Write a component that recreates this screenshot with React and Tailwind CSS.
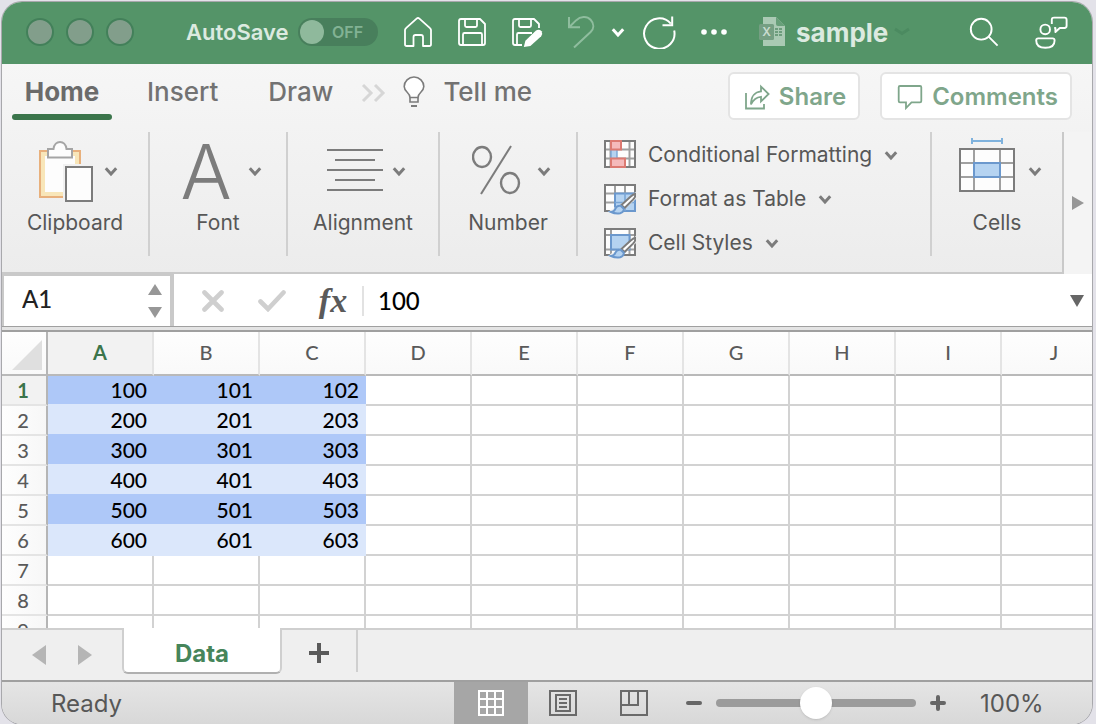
import React, { useState } from "react";

const COLUMNS = ["A", "B", "C", "D", "E", "F", "G", "H", "I", "J"];
const ROWS = [
  [100, 101, 102],
  [200, 201, 203],
  [300, 301, 303],
  [400, 401, 403],
  [500, 501, 503],
  [600, 601, 603],
  [],
  [],
  [],
];

function Chevron({ className = "text-[#7c7c7c]" }) {
  return (
    <svg width="14" height="12" viewBox="0 -2 14 12" fill="none" stroke="currentColor" strokeWidth="3" className={className} aria-hidden="true">
      <path d="M1.8 1.2 L7 6.9 L12.2 1.2" />
    </svg>
  );
}

function TitleBar() {
  const [autoSave, setAutoSave] = useState(false);
  return (
    <header className="flex h-[62px] shrink-0 items-center bg-[#549468] pr-6 pb-[2px] pl-6 text-white">
      <div className="flex gap-3">
        {["Close", "Minimize", "Zoom"].map((name) => (
          <button key={name} aria-label={name} className="size-7 rounded-full border-2 border-[#43805a] bg-[#829e8b]" />
        ))}
      </div>
      <label className="ml-[52px] flex items-center text-[22px] font-semibold text-[#dceae0]">
        <span className="w-28">AutoSave</span>
        <input type="checkbox" role="switch" checked={autoSave} onChange={(e) => setAutoSave(e.target.checked)} className="peer sr-only" />
        <span className="flex h-7 w-20 items-center gap-2 rounded-full bg-[#487f5c] px-[2px] text-[16px] font-semibold text-[#82b294] peer-checked:flex-row-reverse">
          <span className="size-6 rounded-full bg-[#8fb99c]" />
          {autoSave ? "ON" : "OFF"}
        </span>
      </label>
      <div className="ml-[25px] flex items-center gap-6">
        <button aria-label="Home">
          <svg width="30" height="32" viewBox="0 0 30 32" fill="none" stroke="currentColor" strokeWidth="1.8" strokeLinejoin="round">
            <path d="M2 14 Q2 13 3 12.2 L13.6 2.6 Q15 1.4 16.4 2.6 L27 12.2 Q28 13 28 14 V28.2 Q28 30 26.2 30 H20 V21 Q20 19 18 19 H12.5 Q10.5 19 10.5 21 V30 H3.8 Q2 30 2 28.2 Z" />
          </svg>
        </button>
        <button aria-label="Save">
          <svg width="30" height="30" viewBox="0 0 30 30" fill="none" stroke="currentColor" strokeWidth="1.8" strokeLinejoin="round">
            <path d="M4 2 H23 L28 7 V26 Q28 28 26 28 H4 Q2 28 2 26 V4 Q2 2 4 2 Z" />
            <path d="M8 2 V8.5 Q8 10 9.5 10 H18.5 Q20 10 20 8.5 V2 M6 28 V17.5 Q6 16 7.5 16 H23.5 Q25 16 25 17.5 V28" />
          </svg>
        </button>
        <button aria-label="Save as">
          <svg width="32" height="30" viewBox="0 0 32 30" fill="none" stroke="currentColor" strokeWidth="1.8" strokeLinejoin="round">
            <path d="M11 28 H4 Q2 28 2 26 V4 Q2 2 4 2 H23 L28 7 V11" />
            <path d="M8 2 V8.5 Q8 10 9.5 10 H18.5 Q20 10 20 8.5 V2 M6 28 V17.5 Q6 16 7.5 16 H21" />
            <path d="M12.8 30 L14.4 23.8 L25 13.6 Q28 11.8 30.6 14.2 Q32 16.8 30.2 19.2 L19.4 29 Z" fill="currentColor" stroke="none" />
          </svg>
        </button>
      </div>
      <button aria-label="Undo" className="ml-6 text-[#8fbd9e]">
        <svg width="30" height="34" viewBox="0 0 30 34" fill="none" stroke="currentColor" strokeWidth="2">
          <path d="M2 2 V12.2 H13 M2.4 12 L9 5.4 C13.5 1.2 20 1 23.6 4.8 C27.4 8.8 27 13.6 23.6 17 L7 32.5" />
        </svg>
      </button>
      <button aria-label="Undo options" className="ml-[14px]">
        <Chevron className="text-white" />
      </button>
      <button aria-label="Redo" className="ml-4">
        <svg width="36" height="34" viewBox="0 0 36 34" fill="none" stroke="currentColor" strokeWidth="2">
          <path d="M33.2 15.5 A15.2 15.2 0 1 1 29.8 8.6 M31.2 1.6 V10.3 H21.5" />
        </svg>
      </button>
      <button aria-label="More commands" className="ml-[23px]">
        <svg width="28" height="8" viewBox="0 0 28 8" fill="currentColor">
          <circle cx="4" cy="4" r="2.8" />
          <circle cx="14" cy="4" r="2.8" />
          <circle cx="24" cy="4" r="2.8" />
        </svg>
      </button>
      <div className="ml-[31px] flex items-center text-[26px] font-bold text-[#dceae0]">
        <svg width="26" height="30" viewBox="0 0 26 30" aria-hidden="true">
          <path d="M4 0 H17 L26 9 V29 H4 Z" fill="#aacab4" />
          <path d="M17 0 L26 9 H19 Q17 9 17 7 Z" fill="#679f79" />
          <rect x="0" y="7" width="15" height="16" rx="1.5" fill="#759f83" />
          <text x="7.5" y="19" textAnchor="middle" fontFamily="Inter, sans-serif" fontWeight="600" fontSize="12" fill="#c9dccf">X</text>
          <path d="M16 12 h3 M20 12 h3 M16 15 h3 M20 15 h3 M16 18 h3 M20 18 h3" stroke="#6d9d7d" strokeWidth="2" />
        </svg>
        <span className="ml-[11px]">sample</span>
        <svg width="16" height="10" viewBox="0 0 16 10" fill="none" stroke="#4b8a60" strokeWidth="3" className="ml-[6px]" aria-hidden="true">
          <path d="M1 2 L8 6.5 L15 2" />
        </svg>
      </div>
      <div className="ml-auto flex items-center gap-[35px]">
        <button aria-label="Search">
          <svg width="30" height="30" viewBox="0 0 30 30" fill="none" stroke="currentColor" strokeWidth="1.9">
            <circle cx="12.2" cy="12.2" r="10.4" />
            <path d="M19.6 19.6 L28.6 28.6" />
          </svg>
        </button>
        <button aria-label="Presence">
          <svg width="34" height="34" viewBox="0 0 34 34" fill="none" stroke="currentColor" strokeWidth="1.9" strokeLinejoin="round">
            <circle cx="11.2" cy="14.4" r="4.8" />
            <path d="M4.2 23.4 H18.6 Q20.6 23.4 20.6 25.4 C20.6 30.4 16.8 32.8 11.4 32.8 S2.2 30.4 2.2 25.4 Q2.2 23.4 4.2 23.4 Z" />
            <path d="M19.4 2.6 H30.4 Q32.6 2.6 32.6 4.8 V10.8 Q32.6 13 30.4 13 H25.8 L21.4 17 V13 H20.2 M17.8 9 V4.6 Q17.8 2.6 19.8 2.6" />
          </svg>
        </button>
      </div>
    </header>
  );
}

function TabStrip() {
  return (
    <nav className="flex h-[68px] shrink-0 items-start pt-2 text-[26px] leading-[40px] font-medium text-[#727272]">
      <button className="ml-[10px] flex h-12 w-[100px] flex-col items-center font-bold text-[#6b6b6b]">
        <span className="h-[42px]">Home</span>
        <span className="h-[6px] w-full rounded-full bg-[#3b754b]" />
      </button>
      <button className="ml-[35px]">Insert</button>
      <button className="ml-[50px]">Draw</button>
      <button aria-label="More tabs" className="ml-7 flex h-[42px] items-center">
        <svg width="26" height="20" viewBox="0 0 26 20" fill="none" stroke="#d6d6d6" strokeWidth="3">
          <path d="M2 2 L10 10 L2 18 M14 2 L22 10 L14 18" />
        </svg>
      </button>
      <button className="ml-4 flex items-center gap-[18px]">
        <svg width="22" height="32" viewBox="0 0 22 32" fill="none" stroke="#7c7c7c" strokeWidth="1.6">
          <path d="M7 21.5 C7 16.5 1.2 16 1.2 10.6 A9.8 9.6 0 0 1 20.8 10.6 C20.8 16 15 16.5 15 21.5 Z" fill="#fff" />
          <path d="M7 21.5 V26 H15 V21.5" />
          <path d="M8 30 H14" strokeWidth="2" />
        </svg>
        Tell me
      </button>
      <div className="mr-5 ml-auto flex gap-5 text-[24px] font-semibold text-[#7fa68b]">
        <button className="flex h-12 items-center gap-2 rounded-md border-2 border-[#e4e4e4] bg-white pt-[2px] pr-3 pl-[14px]">
          <svg width="27" height="26" viewBox="0 0 27 26" fill="none" stroke="currentColor" strokeWidth="1.8">
            <path d="M2 9 V24.5 H20 V20" />
            <path d="M7 20.5 C7 12.5 11 7.8 17 7.4 V2.6 L24.6 10 L17 17.4 V12.8 C12.5 13 9.5 15 7 20.5 Z" />
          </svg>
          Share
        </button>
        <button className="flex h-12 items-center gap-2 rounded-md border-2 border-[#e4e4e4] bg-white pt-[2px] pr-3 pl-[14px]">
          <svg width="28" height="26" viewBox="0 0 28 26" fill="none" stroke="currentColor" strokeWidth="1.8">
            <path d="M4 2 H24 Q25.3 2 25.3 3.3 V17 Q25.3 18.3 24 18.3 H15.5 L10 24 V18.3 H4 Q2.7 18.3 2.7 17 V3.3 Q2.7 2 4 2 Z" />
          </svg>
          Comments
        </button>
      </div>
    </nav>
  );
}

function Group({ label, className, children }) {
  return (
    <button className={`mb-4 flex flex-col items-center border-r-2 border-[#d0d0d0] ${className}`}>
      <span className="flex h-[78px] items-center gap-[9px] pl-[6px]">{children}<Chevron /></span>
      <span className="leading-[26px]">{label}</span>
    </button>
  );
}

function Brush() {
  return (
    <g>
      <path d="M33 7 L17 20 L8 25 L4 28 Q10 33 17 30 L22 24 L33 14 Z" fill="#f4f4f4" />
      <path d="M31.6 9.8 Q31.8 12.6 29 15.6 L20.6 24 L17.4 21 L27 12.2 Q29.6 10 31.6 9.8 Z" fill="#fff" stroke="#7c7c7c" strokeWidth="2" />
      <path d="M7 28 Q10.4 27.6 11.4 24.6 Q13.2 21.2 16.6 21.8 L19.8 24.8 Q19.8 28.2 16.2 29.2 Q11.6 30.2 7 28 Z" fill="#b5d3f1" stroke="#6b98cd" strokeWidth="2" />
    </g>
  );
}

function Ribbon() {
  return (
    <div className="flex h-[142px] shrink-0 text-[21px] leading-[26px] text-[#575757]">
      <div className="flex min-w-0 flex-1 border-r-2 border-b-2 border-[#c9c9c9]">
        <Group label="Clipboard" className="w-[148px]">
          <svg width="56" height="64" viewBox="0 1 56 64" fill="none">
            <rect x="1" y="13" width="40" height="46" fill="#f8e6b9" stroke="#e8b07c" strokeWidth="2" />
            <rect x="6" y="18" width="30" height="36" fill="#fdfdfd" />
            <path d="M9 11 H14.5 C15.5 1.6 26.5 1.6 27.5 11 H33 V19.5 H9 Z" fill="#fdfdfd" stroke="#a5a5a5" strokeWidth="2" />
            <rect x="24" y="26" width="32" height="38" fill="#f1f1f1" />
            <rect x="27" y="29" width="26" height="34" fill="#fdfdfd" stroke="#7c7c7c" strokeWidth="2" />
          </svg>
        </Group>
        <Group label="Font" className="w-[138px]">
          <span className="w-[58px] text-left text-[76px] leading-[48px] font-light text-[#7c7c7c]">A</span>
        </Group>
        <Group label="Alignment" className="w-[152px]">
          <svg width="56" height="48" viewBox="0 1 56 48" stroke="#7c7c7c" strokeWidth="2">
            <path d="M0 4 H56 M8 14 H48 M0 24 H56 M8 34 H48 M0 44 H56" />
          </svg>
        </Group>
        <Group label="Number" className="w-[138px]">
          <svg width="56" height="52" viewBox="0 1 56 52" fill="none" stroke="#7c7c7c" strokeWidth="2.4">
            <ellipse cx="10" cy="13" rx="9" ry="10" />
            <ellipse cx="38" cy="39" rx="9" ry="10" />
            <path d="M39 2 L9 50" strokeWidth="2" />
          </svg>
        </Group>
        <div className="mb-4 flex min-w-0 flex-1 flex-col border-r-2 border-[#d0d0d0] pt-px pl-[26px]">
          <button className="flex h-11 shrink-0 items-center gap-3">
            <svg width="32" height="34" viewBox="0 -2 32 34" fill="none">
              <rect x="1" y="1" width="30" height="26" fill="#fdfdfd" />
              <path d="M6.5 1 V27 M25.5 1 V27 M1 9.5 H31 M1 18.5 H31" stroke="#a0a0a0" strokeWidth="2" />
              <rect x="1" y="1" width="30" height="26" stroke="#7c7c7c" strokeWidth="2" />
              <rect x="7" y="9.5" width="6" height="9" fill="#b5d3f1" stroke="#79a5d5" strokeWidth="1.4" />
              <rect x="7" y="1" width="10" height="8.5" fill="#f5babb" stroke="#dc7a72" strokeWidth="2" />
              <rect x="7" y="18.5" width="14" height="8.5" fill="#f5babb" stroke="#dc7a72" strokeWidth="2" />
            </svg>
            Conditional Formatting
            <Chevron />
          </button>
          <button className="flex h-11 shrink-0 items-center gap-3">
            <svg width="32" height="34" viewBox="0 -2 32 34" fill="none">
              <rect x="1" y="1" width="30" height="26" fill="#fdfdfd" />
              <path d="M11 1 V27 M21 1 V9 M1 9.5 H31 M1 18.5 H11" stroke="#a0a0a0" strokeWidth="2" />
              <rect x="1" y="1" width="30" height="26" stroke="#7c7c7c" strokeWidth="2" />
              <rect x="11" y="9.5" width="20" height="17.5" fill="#b5d3f1" stroke="#6b98cd" strokeWidth="2" />
              <path d="M21 9 V27 M11 18.5 H31" stroke="#79a5d5" strokeWidth="1.6" />
              <Brush />
            </svg>
            Format as Table
            <Chevron />
          </button>
          <button className="flex h-11 shrink-0 items-center gap-3">
            <svg width="32" height="34" viewBox="0 -2 32 34" fill="none">
              <rect x="1" y="1" width="30" height="26" fill="#fdfdfd" />
              <path d="M7 1 V27 M25.5 1 V27 M1 7 H31 M1 21.5 H31" stroke="#a0a0a0" strokeWidth="2" />
              <rect x="1" y="1" width="30" height="26" stroke="#7c7c7c" strokeWidth="2" />
              <rect x="7" y="7" width="18.5" height="14.5" fill="#b5d3f1" stroke="#6b98cd" strokeWidth="2" />
              <Brush />
            </svg>
            Cell Styles
            <Chevron />
          </button>
        </div>
        <button className="mb-4 flex w-[130px] flex-col items-center">
          <span className="flex h-[78px] items-center gap-[13px] pl-[6px]">
            <svg width="56" height="70" viewBox="0 0 56 70" fill="none">
              <path d="M13 2 V8 M43 2 V8 M13 5 H43" stroke="#7fb2dd" strokeWidth="2" />
              <rect x="1" y="13" width="54" height="42" fill="#fdfdfd" />
              <path d="M15 13 V55 M41 13 V55 M1 27 H55 M1 41 H55" stroke="#a0a0a0" strokeWidth="2" />
              <rect x="1" y="13" width="54" height="42" stroke="#7c7c7c" strokeWidth="2" />
              <rect x="15" y="27" width="26" height="14" fill="#b5d3f1" stroke="#6b98cd" strokeWidth="2" />
            </svg>
            <Chevron />
          </span>
          <span>Cells</span>
        </button>
      </div>
      <button aria-label="Scroll ribbon" className="flex w-7 items-center justify-center bg-[#f4f4f4]">
        <svg width="12" height="14" viewBox="0 0 12 14" fill="#979797"><path d="M0 0 L12 7 L0 14 Z" /></svg>
      </button>
    </div>
  );
}

function FormulaBar() {
  return (
    <div className="flex h-[52px] shrink-0 bg-white font-[Lato,sans-serif] text-[24px] font-medium">
      <div className="flex w-[172px] items-center border-t-2 border-r-4 border-l-2 border-[#c9c9c9] pr-2">
        <input aria-label="Name box" defaultValue="A1" className="min-w-0 flex-1 bg-transparent pb-1 pl-[18px] text-[#222] outline-none" />
        <span className="flex flex-col gap-3">
          <button aria-label="Previous"><svg width="14" height="11" viewBox="0 0 14 11" fill="#979797" className="block"><path d="M7 0 L14 11 H0 Z" /></svg></button>
          <button aria-label="Next"><svg width="14" height="11" viewBox="0 0 14 11" fill="#979797" className="block"><path d="M0 0 H14 L7 11 Z" /></svg></button>
        </span>
      </div>
      <div className="flex flex-1 items-center pt-[2px]">
        <button aria-label="Cancel" className="ml-7">
          <svg width="22" height="22" viewBox="0 0 22 22" stroke="#cfcfcf" strokeWidth="4.6" strokeLinecap="round"><path d="M2.5 2.5 L19.5 19.5 M19.5 2.5 L2.5 19.5" /></svg>
        </button>
        <button aria-label="Enter" className="ml-[34px]">
          <svg width="28" height="22" viewBox="0 0 28 22" fill="none" stroke="#cfcfcf" strokeWidth="4.6" strokeLinecap="round"><path d="M2.5 11.5 L10 19 L25.5 2.5" /></svg>
        </button>
        <button aria-label="Insert function" className="ml-[30px] w-[34px] font-['Liberation_Serif',serif] text-[34px] leading-[44px] font-bold text-[#5a5a5a] italic">fx</button>
        <span className="ml-3 h-[30px] w-[2px] bg-[#e2e2e2]" />
        <input aria-label="Formula" defaultValue="100" className="ml-[14px] min-w-0 flex-1 bg-transparent text-black outline-none" />
        <button aria-label="Expand formula bar" className="mr-2">
          <svg width="14" height="12" viewBox="0 0 14 12" fill="#666"><path d="M0 0 H14 L7 12 Z" /></svg>
        </button>
      </div>
    </div>
  );
}

function cellStyle(row, col) {
  if (row < 6 && col < 3) {
    const dark = row % 2 === 0;
    const nextDark = !dark && row < 5;
    const fill = dark ? "bg-[#aec8f8]" : "bg-[#dbe7fb]";
    const bottom = nextDark ? "border-b-[#aec8f8]" : "border-b-[#dbe7fb]";
    return `pr-[7px] ${fill} ${bottom}`;
  }
  return "border-r-2 border-[#d2d2d2]";
}

function Grid() {
  return (
    <div className="min-h-0 flex-1 overflow-hidden bg-white font-[Lato,sans-serif] text-[20px]">
      <table className="w-[1106px] table-fixed border-separate border-spacing-0">
        <thead>
          <tr className="h-11 bg-linear-to-b from-[#fefefe] to-[#f9f9f9] leading-[24px] text-[#5a5a5a]">
            <th className="w-[46px] border-r-2 border-b-2 border-r-[#b5b5b5] border-b-[#b9b9b9] p-0">
              <svg width="30" height="30" viewBox="0 0 30 30" fill="#dfdfdf" className="mt-1 ml-[10px]" aria-hidden="true"><path d="M30 0 V30 H0 Z" /></svg>
            </th>
            {COLUMNS.map((name, i) => (
              <th key={name} scope="col" className={`w-[106px] border-r-2 border-b-2 border-r-[#e4e4e4] border-b-[#b9b9b9] p-0 pb-[2px] ${i === 0 ? "bg-[#f2f2f2] font-bold text-[#3b754b]" : "font-medium"}`}>
                {name}
              </th>
            ))}
          </tr>
        </thead>
        <tbody>
          {ROWS.map((values, r) => (
            <tr key={r} className="h-[30px] leading-[28px]">
              <th scope="row" className={`border-r-2 border-b-2 border-r-[#b5b5b5] border-b-[#e4e4e4] p-0 pr-[2px] ${r === 0 ? "bg-[#f2f2f2] font-bold text-[#3b754b]" : "bg-linear-to-r from-[#fefefe] to-[#f7f7f7] font-medium text-[#5a5a5a]"}`}>
                {r + 1}
              </th>
              {COLUMNS.map((name, c) => (
                <td key={name} className={`border-b-2 py-0 pl-0 text-right text-[21px] font-medium text-black ${cellStyle(r, c)}`}>
                  {values[c]}
                </td>
              ))}
            </tr>
          ))}
        </tbody>
      </table>
    </div>
  );
}

function SheetTabs() {
  return (
    <div className="flex h-[52px] shrink-0 bg-[#efefef]">
      <div className="flex w-[120px] items-center gap-8 border-t-2 border-[#cfcfcf] pl-[30px]">
        <button aria-label="Previous sheet"><svg width="14" height="20" viewBox="0 0 14 20" fill="#b5b5b5"><path d="M14 0 V20 L0 10 Z" /></svg></button>
        <button aria-label="Next sheet"><svg width="14" height="20" viewBox="0 0 14 20" fill="#b5b5b5"><path d="M0 0 V20 L14 10 Z" /></svg></button>
      </div>
      <button className="h-[46px] w-[160px] rounded-b-md border-x-2 border-b-2 border-x-[#cfcfcf] border-b-[#b0b0b0] bg-white pt-2 text-[24px] font-bold text-[#46855a]">Data</button>
      <div className="w-[76px] border-t-2 border-[#cfcfcf]">
        <button aria-label="Add sheet" className="flex h-[42px] w-full items-center justify-center border-r-2 border-[#cfcfcf]">
          <svg width="20" height="20" viewBox="0 0 20 20" stroke="#5a5a5a" strokeWidth="4" className="mt-1"><path d="M10 0 V20 M0 10 H20" /></svg>
        </button>
      </div>
      <div className="flex-1 border-t-2 border-[#cfcfcf]" />
    </div>
  );
}

function StatusBar() {
  const [zoom, setZoom] = useState(100);
  return (
    <footer className="flex h-11 shrink-0 items-center border-t-2 border-[#a0a0a0] bg-linear-to-b from-[#e5e5e5] to-[#d8d8d8] pl-[49px] text-[24px] text-[#575757]">
      <span className="pt-[2px]">Ready</span>
      <div className="ml-auto flex h-full items-center">
        <button aria-label="Normal view" className="flex h-full w-[74px] items-center justify-center bg-[#a6a6a6]">
          <svg width="26" height="26" viewBox="0 0 26 26" fill="none" stroke="#fff" strokeWidth="2">
            <path d="M1 1 H25 V25 H1 Z M9 1 V25 M17 1 V25 M1 9 H25 M1 17 H25" />
          </svg>
        </button>
        <button aria-label="Page layout view" className="ml-[21px]">
          <svg width="28" height="26" viewBox="0 0 28 26" fill="none" stroke="#6a6a6a" strokeWidth="2">
            <path d="M1 1 H27 V25 H1 Z M7 5 H21 V21 H7 Z M10 9 H18 M10 13 H18 M10 17 H18" />
          </svg>
        </button>
        <button aria-label="Page break view" className="ml-[43px]">
          <svg width="28" height="26" viewBox="0 0 28 26" fill="none" stroke="#6a6a6a" strokeWidth="2">
            <path d="M1 1 H27 V25 H1 Z M1 15 H18 V1 M9 1 V15" />
          </svg>
        </button>
        <button aria-label="Zoom out" onClick={() => setZoom(zoom - 10)} className="ml-[38px]">
          <svg width="16" height="16" viewBox="0 0 16 16" stroke="#666" strokeWidth="4" strokeLinecap="round"><path d="M2 8 H14" /></svg>
        </button>
        <input
          type="range"
          aria-label="Zoom"
          min="0"
          max="200"
          value={zoom}
          onChange={(e) => setZoom(Number(e.target.value))}
          className="mx-[14px] h-8 w-[200px] appearance-none bg-transparent [&::-webkit-slider-runnable-track]:h-2 [&::-webkit-slider-runnable-track]:rounded-full [&::-webkit-slider-runnable-track]:bg-[#9b9b9b] [&::-webkit-slider-thumb]:-mt-3 [&::-webkit-slider-thumb]:size-8 [&::-webkit-slider-thumb]:appearance-none [&::-webkit-slider-thumb]:rounded-full [&::-webkit-slider-thumb]:bg-white [&::-webkit-slider-thumb]:shadow-sm"
        />
        <button aria-label="Zoom in" onClick={() => setZoom(zoom + 10)}>
          <svg width="16" height="16" viewBox="0 0 16 16" stroke="#666" strokeWidth="4" strokeLinecap="round"><path d="M2 8 H14 M8 2 V14" /></svg>
        </button>
        <span className="w-[146px] pt-[2px] pl-[34px]">{zoom}%</span>
      </div>
    </footer>
  );
}

export default function App() {
  return (
    <div className="h-screen overflow-hidden bg-[#e3e2e9] pt-[2px] pr-[4px] pl-[2px] font-[Inter,sans-serif]">
      <main className="flex h-full flex-col overflow-hidden rounded-[20px] bg-[#efefef] shadow-[0_0_0_1px_#a8a8ac]">
        <TitleBar />
        <div className="flex shrink-0 flex-col bg-linear-to-b from-[#f6f6f6] to-[#ececec]">
          <TabStrip />
          <Ribbon />
        </div>
        <FormulaBar />
        <div className="h-[6px] shrink-0 border-t border-b-2 border-[#a0a0a0] bg-[#e4e4e4]" />
        <Grid />
        <SheetTabs />
        <StatusBar />
      </main>
    </div>
  );
}
